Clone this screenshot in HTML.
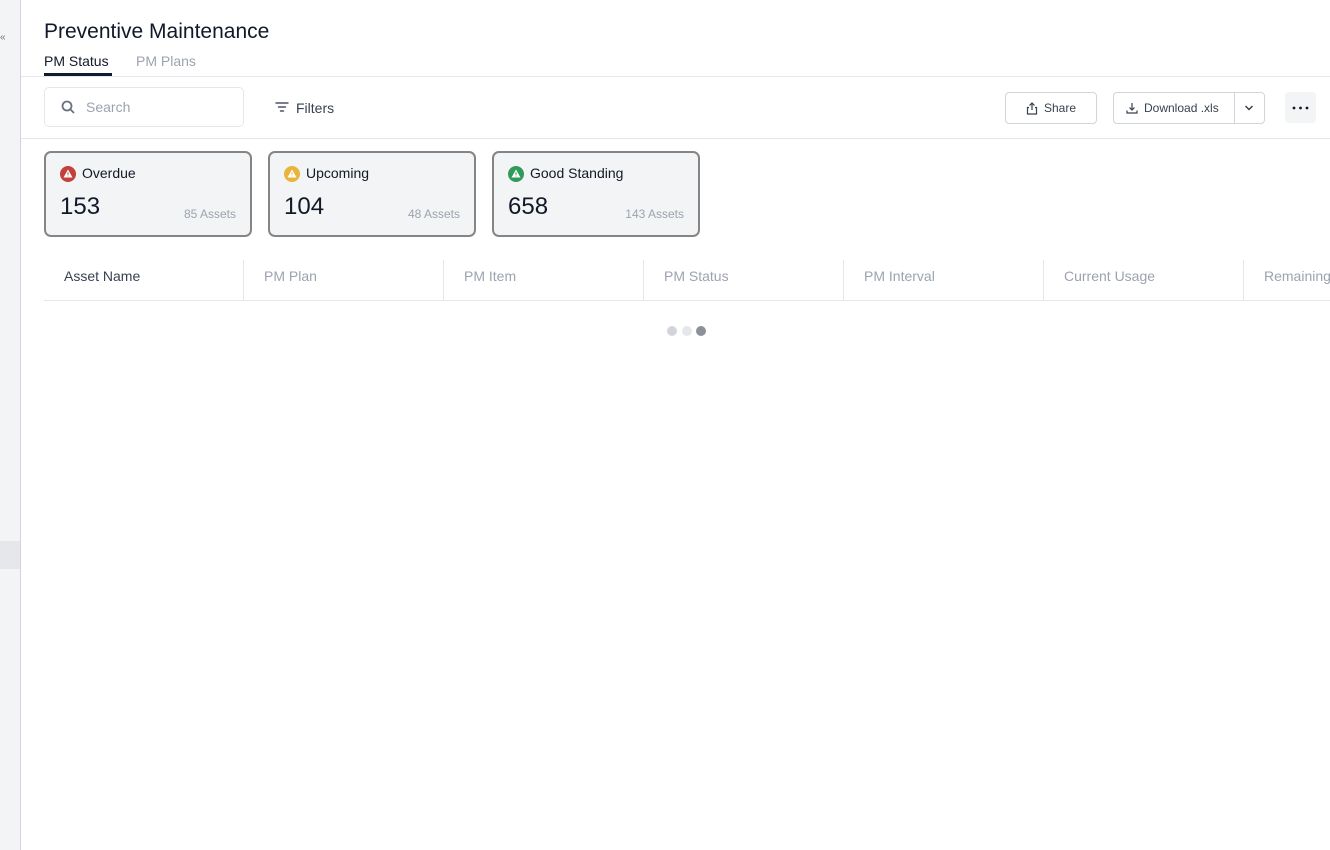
<!DOCTYPE html>
<html><head><meta charset="utf-8"><style>
*{box-sizing:border-box;margin:0;padding:0}
body{width:1330px;height:850px;overflow:hidden;background:#fff;font-family:"Liberation Sans",sans-serif;position:relative;color:#111827}
.side{position:absolute;left:0;top:0;width:21px;height:850px;background:#f3f4f6;border-right:1px solid #d1d5db}
.sel{position:absolute;left:0;top:541px;width:20px;height:28px;background:#e5e7eb}
.abs{position:absolute}
h1{position:absolute;left:44px;top:20px;font-size:21px;font-weight:400;color:#111827}
.tab{position:absolute;top:53px;font-size:14px}
.line{position:absolute;left:21px;right:0;height:1px;background:#e5e7eb}
.search{position:absolute;left:44px;top:87px;width:200px;height:40px;border:1px solid #e5e7eb;border-radius:5px}
.btn{position:absolute;border:1px solid #d1d5db;border-radius:4px;font-size:12px;color:#374151;display:flex;align-items:center;justify-content:center;gap:6px}
.card{position:absolute;top:151px;width:208px;height:86px;border:2px solid #858585;border-radius:7px;background:#f3f4f6}
.card .t{position:absolute;left:36px;top:12px;font-size:14px;color:#111827}
.card .ic{position:absolute;left:14px;top:13px;width:16px;height:16px;border-radius:50%}
.card .n{position:absolute;left:14px;top:40px;font-size:24px;color:#111827}
.card .a{position:absolute;right:14px;top:54px;font-size:12px;color:#9ca3af}
.th{position:absolute;top:260px;height:40px;width:200px;border-left:1px solid #e5e7eb;font-size:14px;color:#9ca3af;padding:8px 20px}
.dot{position:absolute;top:326px;width:10px;height:10px;border-radius:50%}
</style></head><body>
<div class="side"></div><div class="sel"></div>
<div class="abs" style="left:0;top:32px;font-size:10px;color:#6b7280">«</div>
<h1>Preventive Maintenance</h1>
<div class="tab" style="left:44px;color:#111827">PM Status</div>
<div class="abs" style="left:44px;top:73px;width:68px;height:3px;background:#0f1b33"></div>
<div class="tab" style="left:136px;color:#9ca3af">PM Plans</div>
<div class="line" style="top:76px"></div>
<div class="search">
<svg class="abs" style="left:16px;top:12px" width="14" height="14" viewBox="0 0 14 14"><circle cx="6" cy="6" r="4.5" fill="none" stroke="#6b7280" stroke-width="1.8"/><path d="M9.5 9.5L12.5 12.5" stroke="#6b7280" stroke-width="1.8" stroke-linecap="round"/></svg>
<span class="abs" style="left:41px;top:11px;font-size:14px;color:#9ca3af">Search</span>
</div>
<svg class="abs" style="left:275px;top:101px" width="14" height="12" viewBox="0 0 14 12"><path d="M1 2h12M3.5 6h7M5.5 10h3" stroke="#4b5563" stroke-width="1.4" stroke-linecap="round"/></svg>
<span class="abs" style="left:296px;top:100px;font-size:14px;color:#374151">Filters</span>
<div class="btn" style="left:1005px;top:92px;width:92px;height:32px"><svg width="12" height="13" viewBox="0 0 12 13"><path d="M6 1v7M3.5 3.5L6 1l2.5 2.5M3 5.5H1.5v6.5h9V5.5H9" fill="none" stroke="#374151" stroke-width="1.2"/></svg>Share</div>
<div class="btn" style="left:1113px;top:92px;width:152px;height:32px;justify-content:flex-start;padding-left:12px"><svg width="12" height="12" viewBox="0 0 12 12"><path d="M6 1v7M3.5 5.5L6 8l2.5-2.5M1 8.5v2.5h10V8.5" fill="none" stroke="#374151" stroke-width="1.2"/></svg>Download .xls
<div class="abs" style="left:120px;top:0;width:1px;height:30px;background:#d1d5db"></div>
<svg class="abs" style="left:130px;top:11px" width="10" height="8" viewBox="0 0 10 8"><path d="M1.5 2l3.5 3.5L8.5 2" fill="none" stroke="#374151" stroke-width="1.5"/></svg></div>
<div class="abs" style="left:1285px;top:92px;width:31px;height:31px;border-radius:4px;background:#f3f4f6"><svg class="abs" style="left:0;top:0" width="31" height="31"><circle cx="9" cy="16" r="1.4" fill="#111827"/><circle cx="15.5" cy="16" r="1.4" fill="#111827"/><circle cx="22" cy="16" r="1.4" fill="#111827"/></svg></div>
<div class="line" style="top:138px"></div>

<div class="card" style="left:44px"><div class="ic" style="background:#c2413b"></div><svg class="abs" style="left:17px;top:16px" width="10" height="9" viewBox="0 0 10 9"><path d="M5 0.5L9.5 8.5H0.5Z" fill="#fff"/><path d="M5 3.3v2.4M5 6.6v.8" stroke="#c2413b" stroke-width="1"/></svg><div class="t">Overdue</div><div class="n">153</div><div class="a">85 Assets</div></div>
<div class="card" style="left:268px"><div class="ic" style="background:#e8b43c"></div><svg class="abs" style="left:17px;top:16px" width="10" height="9" viewBox="0 0 10 9"><path d="M5 0.5L9.5 8.5H0.5Z" fill="#fff"/><path d="M5 3.3v2.4M5 6.6v.8" stroke="#e8b43c" stroke-width="1"/></svg><div class="t">Upcoming</div><div class="n">104</div><div class="a">48 Assets</div></div>
<div class="card" style="left:492px"><div class="ic" style="background:#2f9a5a"></div><svg class="abs" style="left:17px;top:16px" width="10" height="9" viewBox="0 0 10 9"><path d="M5 0.5L9.5 8.5H0.5Z" fill="#fff"/><path d="M5 3.3v2.4M5 6.6v.8" stroke="#2f9a5a" stroke-width="1"/></svg><div class="t">Good Standing</div><div class="n">658</div><div class="a">143 Assets</div></div>

<div class="th" style="left:44px;border-left:none;color:#374151">Asset Name</div>
<div class="th" style="left:243px">PM Plan</div>
<div class="th" style="left:443px">PM Item</div>
<div class="th" style="left:643px">PM Status</div>
<div class="th" style="left:843px">PM Interval</div>
<div class="th" style="left:1043px">Current Usage</div>
<div class="th" style="left:1243px">Remaining</div>
<div class="abs" style="left:44px;right:0;top:300px;height:1px;background:#e5e7eb"></div>
<div class="dot" style="left:667px;background:#d1d5db"></div>
<div class="dot" style="left:682px;background:#e5e7eb"></div>
<div class="dot" style="left:696px;background:#8b909a"></div>
</body></html>
